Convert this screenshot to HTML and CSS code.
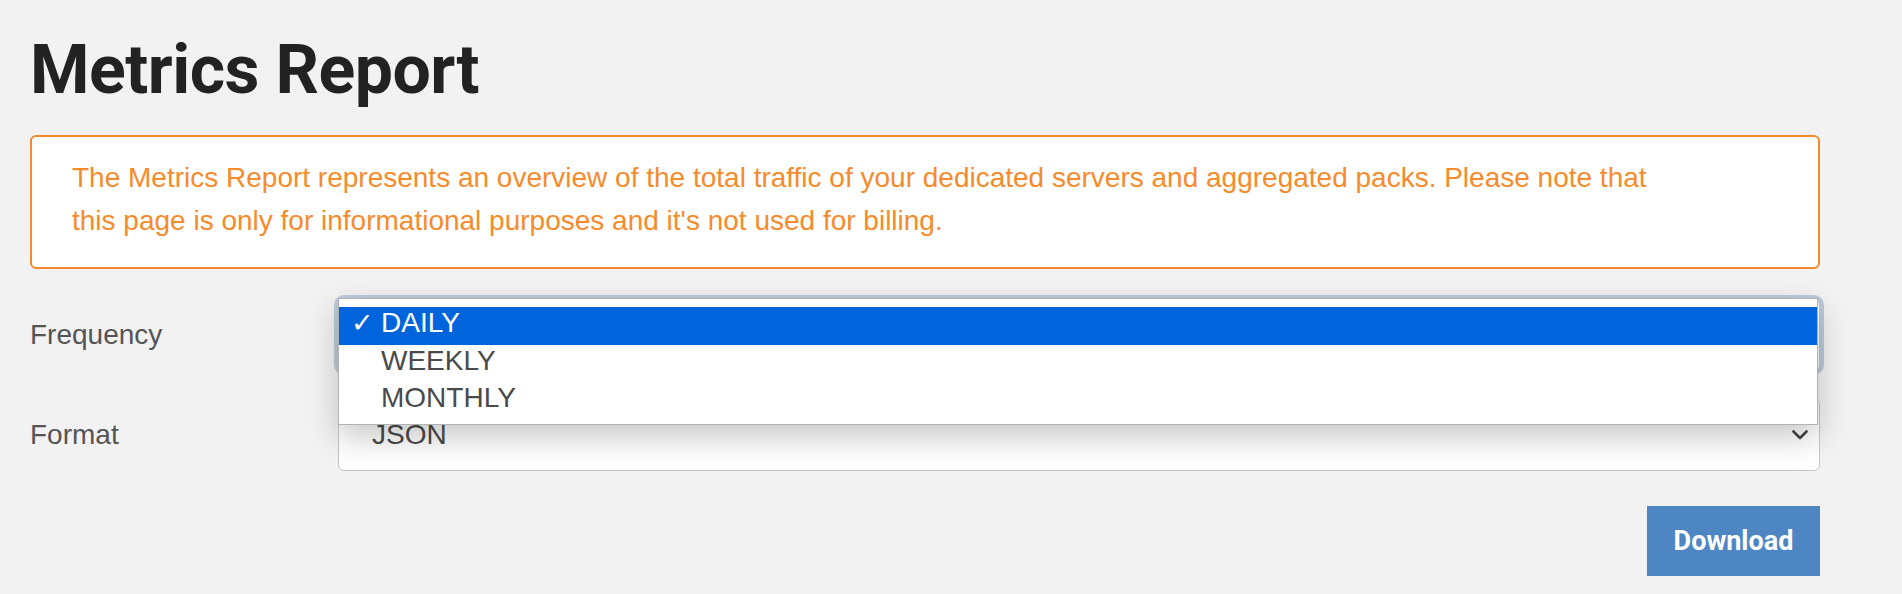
FILE: index.html
```html
<!DOCTYPE html>
<html lang="en">
<head>
<meta charset="utf-8">
<title>Metrics Report</title>
<link rel="stylesheet" href="styles.css">
</head>
<body>
<main class="page">
  <h1 class="title">Metrics Report</h1>
  <div class="alert">
    <p class="alert-text">The Metrics Report represents an overview of the total traffic of your dedicated servers and aggregated packs. Please note that this page is only for informational purposes and it's not used for billing.</p>
  </div>
  <form class="form">
    <div class="row">
      <label class="label">Frequency</label>
      <div class="field">
        <div class="select select-focused" aria-label="DAILY"></div>
        <ul class="dropdown">
          <li class="option option-selected"><span class="check">✓</span><span>DAILY</span></li>
          <li class="option">WEEKLY</li>
          <li class="option">MONTHLY</li>
        </ul>
      </div>
    </div>
    <div class="row">
      <label class="label">Format</label>
      <div class="field">
        <div class="select">
          <span class="select-value">JSON</span>
          <svg class="chevron" width="16" height="10" viewBox="0 0 16 10"><polyline points="1.5,1.5 8,8 14.5,1.5" fill="none" stroke="#444" stroke-width="2.6" stroke-linecap="round" stroke-linejoin="round"/></svg>
        </div>
      </div>
    </div>
    <div class="actions">
      <button type="button" class="btn">Download</button>
    </div>
  </form>
</main>
</body>
</html>
```

FILE: styles.css
```css
html, body {
  margin: 0;
  padding: 0;
  background: #f2f2f2;
}

body {
  font-family: "Liberation Sans", Arial, sans-serif;
  color: #4a4a4a;
}

.page {
  width: 1790px;
  margin-left: 30px;
}

.title {
  font-family: Roboto, "Liberation Sans", sans-serif;
  font-weight: 700;
  font-size: 68px;
  line-height: 82px;
  color: #222;
  margin: 29px 0 24px 0;
  letter-spacing: -0.5px;
}

.alert {
  background: #fff;
  border: 2px solid #f38a2c;
  border-radius: 6px;
  padding: 20px 40px 25px 40px;
}

.alert-text {
  margin: 0;
  max-width: 1600px;
  font-size: 28px;
  line-height: 42.67px;
  color: #f68b2b;
}

.form {
  margin-top: 30px;
}

.row {
  display: grid;
  grid-template-columns: 308px 1fr;
  align-items: center;
  margin-bottom: 28px;
}

.label {
  font-size: 28px;
  color: #555;
}

.field {
  position: relative;
}

.select {
  box-sizing: border-box;
  height: 72px;
  background: #fff;
  border: 1px solid #c6c6c6;
  border-radius: 6px;
  display: flex;
  align-items: center;
  justify-content: space-between;
  padding: 0 11px 0 33px;
}

.select-focused {
  box-shadow: 0 0 0 4px #bccadb;
}

.select-value {
  font-size: 28px;
  color: #4a4a4a;
}

.dropdown {
  position: absolute;
  top: -1px;
  left: 0;
  right: 2px;
  margin: 0;
  padding: 8px 0 5px 0;
  list-style: none;
  background: #fff;
  border: 1px solid rgba(0, 0, 0, 0.3);
  box-shadow: 0 12px 30px rgba(0, 0, 0, 0.22);
  z-index: 10;
}

.option {
  box-sizing: border-box;
  height: 37.33px;
  line-height: 32px;
  padding-left: 42px;
  font-size: 28px;
  color: #4a4a4a;
  display: flex;
  align-items: flex-start;
}

.option-selected {
  background: #0064dc;
  color: #fff;
  padding-left: 12px;
}

.check {
  display: inline-block;
  width: 30px;
  font-family: "DejaVu Sans", sans-serif;
  font-size: 27px;
  line-height: 32px;
  font-weight: 700;
}

.actions {
  display: flex;
  justify-content: flex-end;
  margin-top: 35px;
}

.btn {
  width: 173px;
  height: 70px;
  border: 0;
  border-radius: 0;
  background: #4e86c4;
  color: #fff;
  font-family: Roboto, "Liberation Sans", sans-serif;
  font-weight: 700;
  font-size: 27px;
  padding: 0;
}
```
